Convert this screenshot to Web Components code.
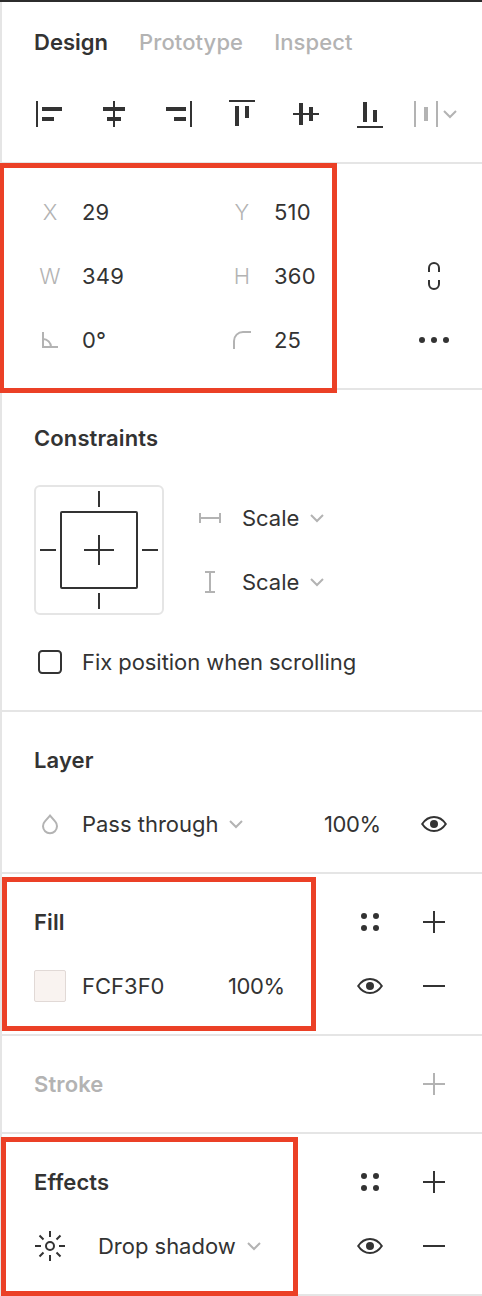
<!DOCTYPE html>
<html lang="en">
<head>
<meta charset="utf-8">
<title>Design panel</title>
<style>
body { margin: 0; background: #fff; }
</style>
</head>
<body>
<design-panel></design-panel>
<script>
const define = (name, html, setup) => {
  const template = document.createElement('template');
  template.innerHTML = html;
  customElements.define(name, class extends HTMLElement {
    constructor() {
      super();
      this.attachShadow({ mode: 'open' }).append(template.content.cloneNode(true));
    }
    connectedCallback() { if (setup) setup(this, this.shadowRoot); }
  });
};

/* Every glyph is drawn on the 64px cell of the panel grid. */
const line = d => `<path d="${d}" fill="none" stroke="currentColor" stroke-width="2"/>`;
const solid = d => `<path d="${d}" fill="currentColor"/>`;
const dot = (x, y, r = 3) => `<circle cx="${x}" cy="${y}" r="${r}" fill="currentColor"/>`;
const GLYPHS = {
  'align-left': solid('M18 19h2v26h-2zM24 25h20v4H24zM24 35h12v4H24z'),
  'align-center': solid('M31 19h2v26h-2zM21 25h22v4H21zM25 35h14v4H25z'),
  'align-right': solid('M44 19h2v26h-2zM20 25h20v4H20zM28 35h12v4H28z'),
  'align-top': solid('M19 18h26v2H19zM25 24h4v20h-4zM35 24h4v12h-4z'),
  'align-middle': solid('M19 31h26v2H19zM25 21h4v22h-4zM35 25h4v14h-4z'),
  'align-bottom': solid('M19 44h26v2H19zM25 20h4v20h-4zM35 28h4v12h-4z'),
  'distribute': solid('M12 19h2v26h-2zM22 25h4v14h-4zM34 19h2v26h-2z') + line('M42 29l6 6 6-6'),
  'angle': line('M25 24V39H40M25 31A8 8 0 0 1 33 39'),
  'radius': line('M24 41V33A9 9 0 0 1 33 24H41'),
  'link': line('M27 28v-4a5 5 0 0 1 10 0v4M27 36v4a5 5 0 0 0 10 0v-4'),
  'more': dot(20, 32) + dot(32, 32) + dot(44, 32),
  'scale-x': line('M22 27v10M42 27v10M22 32h20'),
  'scale-y': line('M27 22h10M27 42h10M32 22v20'),
  'checkbox': '<rect x="21" y="21" width="22" height="22" rx="3.2" fill="none" stroke="currentColor" stroke-width="2"/>',
  'blend': line('M32 23.6L26.9 29.4A7 7 0 1 0 37.1 29.4Z'),
  'eye': line('M20.2 32C23.2 27.4 27.4 25 32 25S40.8 27.4 43.8 32C40.8 36.6 36.6 39 32 39S23.2 36.6 20.2 32Z') + dot(32, 32, 4),
  'styles': dot(26, 26) + dot(38, 26) + dot(26, 38) + dot(38, 38),
  'plus': line('M32 21v22M21 32h22'),
  'minus': line('M21 32h22'),
  'shadow': '<circle cx="32" cy="32" r="4" fill="none" stroke="currentColor" stroke-width="2"/>' +
    line('M32 17v6M32 41v6M17 32h6M41 32h6M21.5 21.5l4 4M38.5 38.5l4 4M42.5 21.5l-4 4M25.5 38.5l-4 4')
};

define('panel-icon', `<style>
:host { display: block; width: 64px; height: 64px; color: #333; }
:host([muted]) { color: #b3b3b3; }
svg { display: block; }
</style><svg width="64" height="64" viewBox="0 0 64 64"></svg>`, (el, root) => {
  root.querySelector('svg').innerHTML = GLYPHS[el.getAttribute('name')];
});

define('panel-section', `<style>
:host { display: block; position: relative; padding: 16px; border-bottom: 2px solid #e5e5e5; }
:host([head]) { padding-top: 0; }
</style><slot></slot>`);

define('panel-row', `<style>
:host { display: grid; grid-template-columns: repeat(7, 64px); height: 64px; align-items: center; }
</style><slot></slot>`);

define('section-title', `<style>
:host { grid-column: span 5; padding-left: 16px; font-weight: 600; }
:host([muted]) { color: #b3b3b3; }
</style><slot></slot>`);

define('field-letter', `<style>
:host { display: block; text-align: center; color: #b3b3b3; font-weight: 300; }
</style><slot></slot>`);

define('field-value', `<style>
:host { display: block; grid-column: span var(--span, 2); padding-left: var(--inset, 0); letter-spacing: var(--tracking, 0.2px); white-space: nowrap; }
</style><slot></slot>`);

define('drop-down', `<style>
:host { display: flex; align-items: center; gap: 11px; grid-column: span var(--span, 2); padding-left: var(--inset, 0); letter-spacing: -0.02px; white-space: nowrap; }
svg { display: block; flex: none; color: #b3b3b3; }
</style><slot></slot><svg width="14" height="10" viewBox="0 0 14 10"><path d="M1 2l6 6 6-6" fill="none" stroke="currentColor" stroke-width="2"/></svg>`);

define('tab-bar', `<style>
:host { display: flex; height: 80px; align-items: center; gap: 31px; padding-left: 16px; color: #b3b3b3; font-weight: 500; }
::slotted([active]) { color: #333; font-weight: 600; letter-spacing: 0; }
</style><slot></slot>`);

define('color-swatch', `<style>
:host { display: block; box-sizing: border-box; width: 32px; height: 32px; margin-left: 16px; border: 1px solid #e1d9d6; border-radius: 2px; background: #f9f3f0; }
</style>`);

define('constraint-box', `<style>
:host { display: block; box-sizing: border-box; width: 130px; height: 130px; margin: -1px 0 -1px 16px; border: 2px solid #e5e5e5; border-radius: 6px; color: #333; }
svg { display: block; }
</style><svg width="126" height="126" viewBox="2 2 126 126" fill="none" stroke="currentColor" stroke-width="2">
<rect x="27" y="27" width="76" height="76" rx="1"/>
<path d="M65 50v30M50 65h30M65 6v16M65 108v16M6 65h16M108 65h16"/></svg>`);

define('constraint-grid', `<style>
:host { display: grid; grid-template-columns: 160px 1fr; margin: 16px 0; height: 128px; }
</style><slot name="box"></slot><div><slot></slot></div>`);

/* Red frame that calls out part of a section. */
define('callout-frame', `<style>
:host { position: absolute; z-index: 1; box-sizing: border-box; border: 5px solid #eb4026; pointer-events: none; }
</style>`);

define('design-panel', `<style>
:host { display: block; box-sizing: border-box; width: 482px; height: 1296px; overflow: hidden; border-top: 2px solid #2c2c2c; background: #fff; color: #333; font: 400 22px/28px Inter, sans-serif; letter-spacing: 0.11px; }
main { border-left: 2px solid #e5e5e5; }
.geometry { left: -3px; top: -1px; width: 338px; height: 230px; }
.fill { left: 0; top: 3px; width: 314px; height: 154px; }
.effects { left: -1px; top: 3px; width: 297px; height: 159px; }
.percent { --tracking: -0.4px; }
.end { grid-column: 7; }
</style>
<main>
<panel-section head>
  <tab-bar><span active>Design</span><span>Prototype</span><span>Inspect</span></tab-bar>
  <panel-row>
    <panel-icon name="align-left"></panel-icon><panel-icon name="align-center"></panel-icon><panel-icon name="align-right"></panel-icon>
    <panel-icon name="align-top"></panel-icon><panel-icon name="align-middle"></panel-icon><panel-icon name="align-bottom"></panel-icon>
    <panel-icon name="distribute" muted></panel-icon>
  </panel-row>
</panel-section>
<panel-section>
  <panel-row><field-letter>X</field-letter><field-value>29</field-value><field-letter>Y</field-letter><field-value>510</field-value></panel-row>
  <panel-row><field-letter>W</field-letter><field-value>349</field-value><field-letter>H</field-letter><field-value>360</field-value><panel-icon name="link"></panel-icon></panel-row>
  <panel-row><panel-icon name="angle" muted></panel-icon><field-value>0°</field-value><panel-icon name="radius" muted></panel-icon><field-value>25</field-value><panel-icon name="more"></panel-icon></panel-row>
  <callout-frame class="geometry"></callout-frame>
</panel-section>
<panel-section>
  <panel-row><section-title>Constraints</section-title></panel-row>
  <constraint-grid>
    <constraint-box slot="box"></constraint-box>
    <panel-row><panel-icon name="scale-x" muted></panel-icon><drop-down>Scale</drop-down></panel-row>
    <panel-row><panel-icon name="scale-y" muted></panel-icon><drop-down>Scale</drop-down></panel-row>
  </constraint-grid>
  <panel-row><panel-icon name="checkbox"></panel-icon><field-value style="--span:6;--tracking:-0.06px">Fix position when scrolling</field-value></panel-row>
</panel-section>
<panel-section>
  <panel-row><section-title>Layer</section-title></panel-row>
  <panel-row><panel-icon name="blend" muted></panel-icon><drop-down style="--span:3">Pass through</drop-down><field-value class="percent" style="--inset:50px">100%</field-value><panel-icon name="eye"></panel-icon></panel-row>
</panel-section>
<panel-section>
  <panel-row><section-title>Fill</section-title><panel-icon name="styles"></panel-icon><panel-icon name="plus"></panel-icon></panel-row>
  <panel-row><color-swatch></color-swatch><field-value style="--tracking:0px">FCF3F0</field-value><field-value class="percent" style="--inset:18px">100%</field-value><panel-icon name="eye"></panel-icon><panel-icon name="minus"></panel-icon></panel-row>
  <callout-frame class="fill"></callout-frame>
</panel-section>
<panel-section>
  <panel-row><section-title muted>Stroke</section-title><panel-icon class="end" name="plus" muted></panel-icon></panel-row>
</panel-section>
<panel-section>
  <panel-row><section-title>Effects</section-title><panel-icon name="styles"></panel-icon><panel-icon name="plus"></panel-icon></panel-row>
  <panel-row><panel-icon name="shadow"></panel-icon><drop-down style="--span:4;--inset:16px">Drop shadow</drop-down><panel-icon name="eye"></panel-icon><panel-icon name="minus"></panel-icon></panel-row>
  <callout-frame class="effects"></callout-frame>
</panel-section>
</main>`);
</script>
</body>
</html>
